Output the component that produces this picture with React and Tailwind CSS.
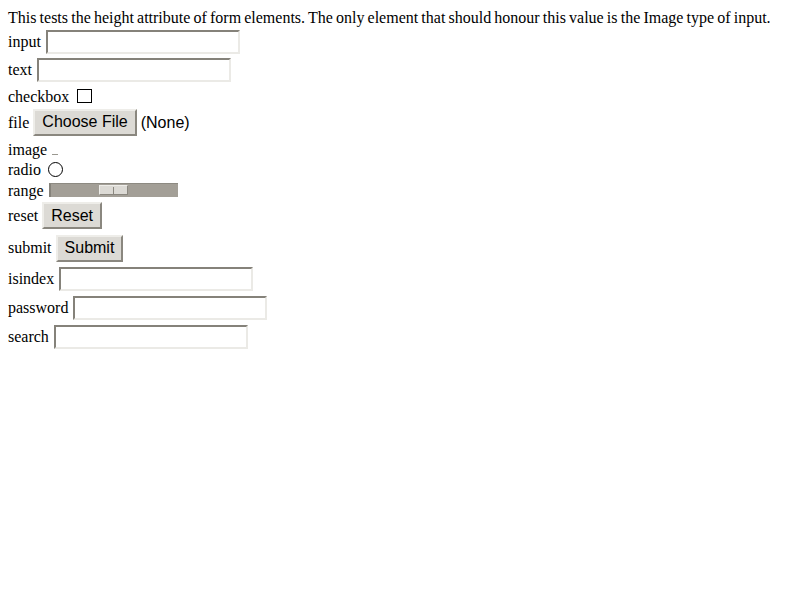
const fieldBox =
  "h-[24px] w-[194px] bg-white border-2 border-t-[#85827a] border-l-[#85827a] border-b-[#ebeae6] border-r-[#ebeae6]";
const buttonBox =
  "h-[27px] flex items-center px-[7px] bg-[#dcdad5] text-black border-2 border-t-[#eeede9] border-l-[#eeede9] border-b-[#8a877f] border-r-[#8a877f] text-[16px] font-['Liberation_Sans',sans-serif]";

const Row = ({ h, gap = "gap-[5px]", children }) => (
  <div className={`flex items-center ${gap} ${h}`}>{children}</div>
);

export default function App() {
  return (
    <div className="min-h-[600px] bg-white px-[8px] pt-[8px] text-black text-[16px] font-['Liberation_Serif',serif]">
      <div className="h-[20px] leading-[20px] [word-spacing:-0.85px]">
        This tests the height attribute of form elements. The only element that should honour this value is the Image type of input.
      </div>

      <Row h="h-[27px]">
        <span>input</span>
        <div className={fieldBox} />
      </Row>
      <Row h="h-[30px]">
        <span>text</span>
        <div className={fieldBox} />
      </Row>
      <Row h="h-[20px]">
        <span className="mt-[4px]">checkbox</span>
        <div className="ml-[3px] mt-[2px] h-[14px] w-[15px] border border-black bg-white" />
      </Row>
      <Row h="h-[34px]" gap="gap-[4px]">
        <span className="mt-[2px]">file</span>
        <div className={buttonBox}>Choose File</div>
        <span className="mt-[1px] font-['Liberation_Sans',sans-serif]">(None)</span>
      </Row>
      <Row h="h-[20px]">
        <span className="mt-[2px]">image</span>
        <div className="mt-[10px] h-[1px] w-[6px] bg-[#9a9890]" />
      </Row>
      <Row h="h-[21px]">
        <span>radio</span>
        <div className="ml-[2px] h-[15px] w-[15px] rounded-full border-[1.5px] border-black bg-white" />
      </Row>
      <Row h="h-[19px]">
        <span className="mt-[2px]">range</span>
        <div className="flex h-[14px] w-[129px] items-center bg-[#a39f97] border-l-2 border-t border-l-[#85827a] border-t-[#8d8a82] pl-[48px]">
          <div className="flex h-[10px] w-[29px] items-center justify-center bg-[#dcdad5] border border-[#eeede9] border-b-[#8a877f] border-r-[#8a877f]">
            <div className="h-[7px] w-[1px] bg-[#8a877f]" />
          </div>
        </div>
      </Row>
      <Row h="h-[33px]" gap="gap-[4px]">
        <span>reset</span>
        <div className={buttonBox}>Reset</div>
      </Row>
      <Row h="h-[32px]" gap="gap-[4px]">
        <span>submit</span>
        <div className={buttonBox}>Submit</div>
      </Row>
      <Row h="h-[29px]">
        <span>isindex</span>
        <div className={fieldBox} />
      </Row>
      <Row h="h-[29px]">
        <span>password</span>
        <div className={fieldBox} />
      </Row>
      <Row h="h-[29px]">
        <span>search</span>
        <div className={fieldBox} />
      </Row>
    </div>
  );
}
